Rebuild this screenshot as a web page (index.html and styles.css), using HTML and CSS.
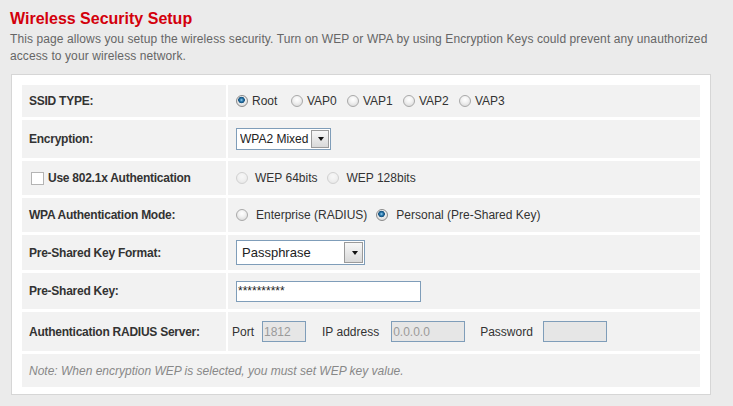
FILE: index.html
```html
<!doctype html>
<html lang="en">
<head>
    <meta charset="utf-8"/>
    <title>Wireless Security Setup</title>
    <link rel="stylesheet" href="styles.css">
</head>

<body>

    <!--page head-->
    <div class="head">
        <h1 class="title">Wireless Security Setup</h1>
        <p class="intro">This page allows you setup the wireless security. Turn on WEP or WPA by using Encryption Keys could prevent any unauthorized access to your wireless network.</p>
    </div>

    <!--settings box-->
    <div class="panel">
        <table class="form">
            <tr class="row-ssid">
                <td class="label">SSID TYPE:</td>
                <td class="value">
                    <div class="opts opts-tight">
                        <label class="opt"><input class="radio" type="radio" name="ssid" checked>Root</label>
                        <label class="opt"><input class="radio" type="radio" name="ssid">VAP0</label>
                        <label class="opt"><input class="radio" type="radio" name="ssid">VAP1</label>
                        <label class="opt"><input class="radio" type="radio" name="ssid">VAP2</label>
                        <label class="opt"><input class="radio" type="radio" name="ssid">VAP3</label>
                    </div>
                </td>
            </tr>
            <tr class="row-enc">
                <td class="label">Encryption:</td>
                <td class="value">
                    <span class="dropdown dropdown-enc">
                        <select>
                            <option>WPA2 Mixed</option>
                        </select>
                    </span>
                </td>
            </tr>
            <tr class="row-8021x">
                <td class="label"><label class="check-label"><input class="check" type="checkbox">Use 802.1x Authentication</label></td>
                <td class="value">
                    <div class="opts opts-wep">
                        <label class="opt"><input class="radio" type="radio" name="wep" disabled>WEP 64bits</label>
                        <label class="opt"><input class="radio" type="radio" name="wep" disabled>WEP 128bits</label>
                    </div>
                </td>
            </tr>
            <tr class="row-mode">
                <td class="label">WPA Authentication Mode:</td>
                <td class="value">
                    <div class="opts opts-wide">
                        <label class="opt"><input class="radio" type="radio" name="mode">Enterprise (RADIUS)</label>
                        <label class="opt"><input class="radio" type="radio" name="mode" checked>Personal (Pre-Shared Key)</label>
                    </div>
                </td>
            </tr>
            <tr class="row-fmt">
                <td class="label">Pre-Shared Key Format:</td>
                <td class="value">
                    <span class="dropdown dropdown-fmt">
                        <select>
                            <option>Passphrase</option>
                        </select>
                    </span>
                </td>
            </tr>
            <tr class="row-psk">
                <td class="label">Pre-Shared Key:</td>
                <td class="value"><input class="text psk" type="text" value="**********"></td>
            </tr>
            <tr class="row-radius">
                <td class="label">Authentication RADIUS Server:</td>
                <td class="value">
                    <div class="radius">
                        <span class="field-name">Port</span>
                        <input class="text off port" type="text" value="1812" disabled>
                        <span class="field-name ip-name">IP address</span>
                        <input class="text off ip" type="text" value="0.0.0.0" disabled>
                        <span class="field-name pass-name">Password</span>
                        <input class="text off pass" type="password" disabled>
                    </div>
                </td>
            </tr>
            <tr class="row-note">
                <td class="note" colspan="2">Note: When encryption WEP is selected, you must set WEP key value.</td>
            </tr>
        </table>
    </div>

</body>
</html>
```

FILE: styles.css
```css
* {
    margin: 0;
    padding: 0;
    box-sizing: border-box;
}

body {
    background: #ebebeb;
    font-family: "Liberation Sans", Arial, sans-serif;
    font-size: 12px;
    color: #333;
}

.head {
    padding: 7px 10px 0 10px;
}

.title {
    font-size: 16px;
    line-height: 24px;
    font-weight: bold;
    color: #d3000b;
}

.intro {
    color: #666;
    line-height: 17px;
    letter-spacing: 0.1px;
}

.panel {
    width: 700px;
    margin: 9px 0 0 11px;
    padding: 7px 8px 4px 8px;
    background: #fff;
    border: 1px solid #d6d6d6;
}

.form {
    width: 100%;
    border-collapse: separate;
    border-spacing: 2px 3px;
}

.form td {
    background: #f2f2f2;
    vertical-align: middle;
}

.form .label {
    width: 204px;
    padding-left: 7px;
    font-weight: bold;
    letter-spacing: -0.25px;
    color: #333;
}

.form .value {
    padding-left: 8px;
}

.row-ssid td { height: 32px; }
.row-enc td { height: 38px; }
.row-8021x td { height: 34px; }
.row-mode td { height: 34px; }
.row-fmt td { height: 35px; }
.row-psk td { height: 36px; }
.row-radius td { height: 39px; }
.row-note td { height: 33px; }

/* radio groups */
.opts {
    display: flex;
    align-items: center;
}

.opt {
    display: flex;
    align-items: center;
    color: #333;
}

.radio {
    appearance: none;
    width: 12px;
    height: 12px;
    border-radius: 50%;
    border: 1px solid #a9a9a9;
    background: radial-gradient(circle at 50% 35%, #ffffff 0, #f2f2f2 40%, #d3d3d3 100%);
    margin: 0;
    flex: none;
}

.radio:checked {
    border-color: #8a8a8a;
    background:
        radial-gradient(circle at 45% 40%, #9fd3f0 0, #2b79ad 1.6px, #134e7a 3px, rgba(0,0,0,0) 3.6px),
        radial-gradient(circle at 50% 35%, #ffffff 0, #eeeeee 45%, #cfcfcf 100%);
}

.radio:disabled {
    opacity: 0.45;
}

.opts-tight .radio { margin-right: 4px; }
.opts-tight .opt { width: 56px; }
.opts-tight .opt:first-child { width: 55px; }

.opts-wep .radio { margin-right: 7px; }
.opts-wep .opt { margin-right: 10px; }

.opts-wide .radio { margin-right: 8px; }
.opts-wide .opt { margin-right: 9px; }

/* checkbox */
.check-label {
    display: flex;
    align-items: center;
    margin-left: 2px;
}

.check {
    appearance: none;
    width: 13px;
    height: 13px;
    border: 1px solid #b4b4b4;
    background: #fff;
    margin-right: 4px;
}

/* select with a drawn button */
.dropdown {
    display: inline-block;
    position: relative;
    vertical-align: middle;
}

.dropdown select {
    appearance: none;
    border: 1px solid #7f9db9;
    background: #fff;
    font-family: "Liberation Sans", Arial, sans-serif;
    color: #222;
    outline: none;
}

.dropdown::before {
    content: "";
    position: absolute;
    top: 2px;
    right: 2px;
    bottom: 2px;
    width: 16px;
    border: 1px solid #9a9a9a;
    background: linear-gradient(#f7f7f7, #d9d9d9);
}

.dropdown::after {
    content: "";
    position: absolute;
    top: 50%;
    margin-top: -2px;
    border-left: 3.5px solid transparent;
    border-right: 3.5px solid transparent;
    border-top: 4px solid #111;
}

.dropdown-enc select {
    width: 95px;
    height: 22px;
    font-size: 12px;
    padding-left: 3px;
}

.dropdown-enc::after { right: 7px; }

.dropdown-fmt select {
    width: 129px;
    height: 25px;
    font-size: 13px;
    padding-left: 5px;
}

.dropdown-fmt::before {
    width: 17px;
}

.dropdown-fmt::after { right: 7px; }

/* text boxes */
.text {
    border: 1px solid #7f9db9;
    background: #fff;
    height: 21px;
    font-family: "Liberation Sans", Arial, sans-serif;
    font-size: 12px;
    color: #222;
    padding-left: 1px;
    outline: none;
    vertical-align: middle;
}

.psk {
    width: 185px;
}

.text.off {
    background: #e6e6e6;
    color: #9a9a9a;
}

.radius {
    display: flex;
    align-items: center;
    margin-left: -4px;
}

.field-name {
    color: #333;
    margin-right: 8px;
}

.port { width: 44px; }
.ip { width: 74px; }
.pass { width: 64px; }

.ip-name { margin-left: 16px; margin-right: 12px; }
.pass-name { margin-left: 15px; margin-right: 10px; }

.note {
    padding-left: 7px;
    font-style: italic;
    color: #888;
}
```
